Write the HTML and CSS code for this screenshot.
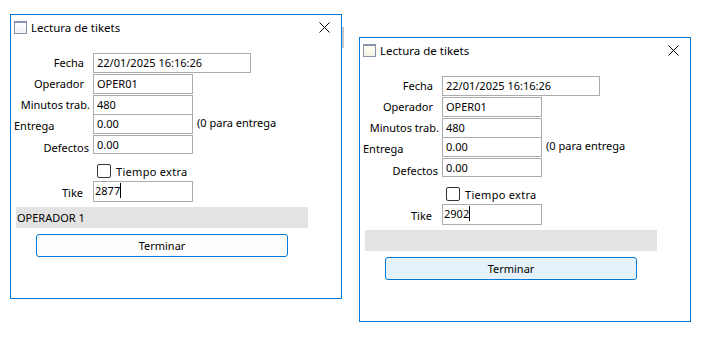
FILE: index.html
```html
<!DOCTYPE html>
<html lang="es">
<head>
    <meta charset="UTF-8">
    <meta name="viewport" content="width=device-width, initial-scale=1.0">
    <title>Lectura de tikets</title>
    <link rel="stylesheet" href="styles.css">
</head>
<body>
    <span class="behind-edge"></span>

    <div class="window win-1">
        <div class="titlebar">
            <span class="app-icon"></span>
            <span class="title">Lectura de tikets</span>
            <svg class="close" width="11" height="11" viewBox="0 0 11 11"><path d="M0.5 0.5L10.5 10.5M10.5 0.5L0.5 10.5"/></svg>
        </div>
        <div class="form">
            <div class="row row-fecha"><span class="lbl">Fecha</span><div class="field wide">22/01/2025 16:16:26</div></div>
            <div class="row row-oper"><span class="lbl">Operador</span><div class="field">OPER01</div></div>
            <div class="row row-min"><span class="lbl lbl-min">Minutos trab.</span><div class="field">480</div></div>
            <div class="row row-ent"><span class="lbl lbl-ent">Entrega</span><div class="field">0.00</div><span class="hint">(0 para entrega</span></div>
            <div class="row row-def"><span class="lbl lbl-def">Defectos</span><div class="field short">0.00</div></div>
            <div class="row row-check"><span class="checkbox"></span><span class="check-text">Tiempo extra</span></div>
            <div class="row row-tike"><span class="lbl lbl-tike">Tike</span><div class="field tall">2877<span class="caret"></span></div></div>
            <div class="status">OPERADOR 1</div>
            <button class="btn">Terminar</button>
        </div>
    </div>

    <div class="window win-2">
        <div class="titlebar">
            <span class="app-icon cream"></span>
            <span class="title">Lectura de tikets</span>
            <svg class="close" width="11" height="11" viewBox="0 0 11 11"><path d="M0.5 0.5L10.5 10.5M10.5 0.5L0.5 10.5"/></svg>
        </div>
        <div class="form">
            <div class="row row-fecha"><span class="lbl">Fecha</span><div class="field wide">22/01/2025 16:16:26</div></div>
            <div class="row row-oper"><span class="lbl">Operador</span><div class="field">OPER01</div></div>
            <div class="row row-min"><span class="lbl lbl-min">Minutos trab.</span><div class="field">480</div></div>
            <div class="row row-ent"><span class="lbl lbl-ent">Entrega</span><div class="field">0.00</div><span class="hint">(0 para entrega</span></div>
            <div class="row row-def"><span class="lbl lbl-def">Defectos</span><div class="field short">0.00</div></div>
            <div class="row row-check"><span class="checkbox"></span><span class="check-text">Tiempo extra</span></div>
            <div class="row row-tike"><span class="lbl lbl-tike">Tike</span><div class="field tall">2902<span class="caret"></span></div></div>
            <div class="status"></div>
            <button class="btn btn-hover">Terminar</button>
        </div>
    </div>
</body>
</html>
```

FILE: styles.css
```css
body {
    margin: 0;
    background: #fff;
    font-family: "Noto Sans", sans-serif;
    font-size: 11px;
    color: #000;
}

/* windows sit on a free desktop */
.window {
    position: absolute;
    width: 332px;
    height: 285px;
    box-sizing: border-box;
    border: 1px solid #0078d7;
    background: #fff;
}
.win-1 { left: 10px; top: 14px; }
.win-2 { left: 359px; top: 37px; }

.behind-edge {
    position: absolute;
    left: 342px;
    top: 27px;
    width: 2px;
    height: 21px;
    background: #c8c8c8;
}

.titlebar {
    display: flex;
    align-items: center;
    height: 30px;
    box-sizing: border-box;
    padding: 0 11px 5px 3px;
}
.app-icon {
    width: 11px;
    height: 10px;
    border: 1px solid #8a93ad;
    border-top-width: 2px;
    background: linear-gradient(#fff, #eef0f5);
}
.app-icon.cream { background: linear-gradient(#fffff4, #f5f3e6); }
.title {
    margin-left: 4px;
    flex: 1;
    font-size: 11.5px;
}
.close {
    fill: none;
    stroke: #000;
    stroke-width: 1;
}

.form {
    display: flex;
    flex-direction: column;
    padding-top: 8px;
}
.row {
    display: flex;
    align-items: flex-start;
}
.row-oper { margin-top: 1px; }
.row-min { margin-top: 1px; }
.row-ent { margin-top: -1px; }
.row-def { margin-top: 0; }
.row-check { margin-top: 7px; height: 14px; align-items: center; }
.row-tike { margin-top: 3px; }

.lbl {
    width: 82px;
    box-sizing: border-box;
    padding: 1px 9px 0 0;
    text-align: right;
    line-height: 18px;
}
.lbl-min { padding-right: 3px; }
.lbl-ent { text-align: left; padding: 3px 0 0 3px; }
.lbl-def { padding: 4px 4px 0 0; }
.lbl-tike { padding: 3px 10px 0 0; }

.field {
    width: 100px;
    height: 20px;
    box-sizing: border-box;
    border: 1px solid #ababab;
    padding-left: 3px;
    line-height: 18px;
    white-space: nowrap;
}
.field.wide { width: 158px; }
.field.short { height: 19px; }
.field.tall { height: 21px; padding-left: 1px; }
.caret {
    display: inline-block;
    width: 1px;
    height: 15px;
    background: #000;
    vertical-align: -3px;
}
.hint {
    margin-left: 4px;
    line-height: 18px;
}

.checkbox {
    width: 14px;
    height: 14px;
    box-sizing: border-box;
    margin-left: 86px;
    border: 1px solid #333;
    border-radius: 2px;
}
.check-text { margin-left: 5px; letter-spacing: 0.3px; }

.status {
    margin: 5px 0 0 5px;
    width: 292px;
    height: 21px;
    box-sizing: border-box;
    padding-left: 1px;
    background: #e3e3e3;
    line-height: 21px;
}

.btn {
    margin: 6px 0 0 25px;
    width: 252px;
    height: 23px;
    border: 1px solid #0078d7;
    border-radius: 3px;
    background: #fdfdfd;
    font: inherit;
    color: #000;
    padding: 0;
}
.btn-hover { background: #e5f1fb; }
```
